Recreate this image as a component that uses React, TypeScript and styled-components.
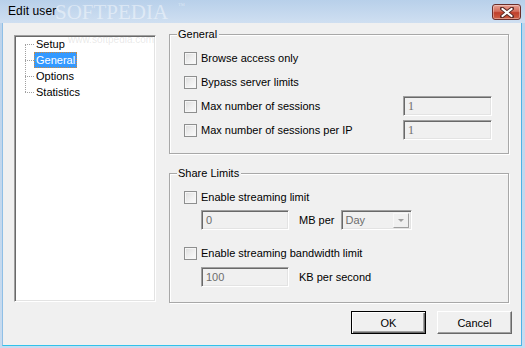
import styled, { createGlobalStyle } from 'styled-components';

const Global = createGlobalStyle`
  html, body {
    margin: 0;
    padding: 0;
    background: #f0f0f0;
  }
  * {
    box-sizing: border-box;
  }
`;

// outer window frame
const Window = styled.div`
  position: relative;
  width: 525px;
  height: 348px;
  display: flex;
  flex-direction: column;
  background: linear-gradient(#bcd3eb, #c8dbef);
  font-family: "Liberation Sans", Arial, sans-serif;
  font-size: 11px;
  color: #000;
  overflow: hidden;
`;

const TitleBar = styled.div`
  height: 23px;
  display: flex;
  align-items: center;
  justify-content: space-between;
  padding: 0 4px 2px 8px;
  background: linear-gradient(#b8d0ea, #cfdff1);
`;

const TitleText = styled.span`
  font-size: 12px;
  letter-spacing: 0.1px;
`;

const CloseButton = styled.div`
  width: 29px;
  height: 16px;
  margin-top: 3px;
  border: 1px solid #6b2e2a;
  border-radius: 3px;
  background: linear-gradient(#e6a092 0%, #d46e5c 45%, #bf3f2a 55%, #cf6046 100%);
  box-shadow: inset 0 0 0 1px rgba(255, 255, 255, 0.35);
  display: flex;
  align-items: center;
  justify-content: center;
`;

// grey dialog surface inside the frame
const Body = styled.div`
  flex: 1;
  margin: 0 3px 2px 2px;
  background: #f0f0f0;
  border-left: 1px solid #8fbfe6;
  border-right: 1px solid #4fb1e6;
  border-bottom: 1px solid #30c2ea;
  padding: 12px 9px 0 11px;
  display: flex;
  flex-direction: column;
`;

const Main = styled.div`
  display: flex;
  align-items: flex-start;
`;

// tree view on the left
const Tree = styled.div`
  position: relative;
  width: 142px;
  height: 267px;
  background: #fff;
  border: 1px solid;
  border-color: #a0a0a0 #fff #fff #a0a0a0;
  box-shadow: inset 1px 1px 0 #696969, inset -1px -1px 0 #e3e3e3;
`;

const TreeList = styled.div`
  position: relative;
  &::before {
    content: "";
    position: absolute;
    left: 10px;
    top: 8px;
    bottom: 8px;
    border-left: 1px dotted #a0a0a0;
  }
`;

const TreeItem = styled.div`
  position: relative;
  height: 16px;
  display: flex;
  align-items: center;
  padding-left: 19px;
  &::before {
    content: "";
    position: absolute;
    left: 10px;
    top: 8px;
    width: 9px;
    border-top: 1px dotted #a0a0a0;
  }
`;

const TreeLabel = styled.span<{ $selected?: boolean }>`
  height: 16px;
  line-height: 14px;
  padding: 0 1px;
  border: 1px ${(p) => (p.$selected ? 'dotted #d08a3a' : 'solid transparent')};
  background: ${(p) => (p.$selected ? '#3399ff' : 'transparent')};
  color: ${(p) => (p.$selected ? '#fff' : '#000')};
`;

// right column with the group boxes
const Column = styled.div`
  width: 340px;
  margin-left: 13px;
  margin-top: -1px;
  display: flex;
  flex-direction: column;
  gap: 19px;
`;

const GroupBox = styled.div<{ $height: number }>`
  height: ${(p) => p.$height}px;
  border: 1px solid #a8a8a8;
  box-shadow: 1px 1px 0 #fff, inset 1px 1px 0 #fff;
  padding: 0 16px 0 14px;
`;

const GroupTitle = styled.div`
  width: fit-content;
  margin: -7px 0 0 -7px;
  padding: 0 2px 0 1px;
  line-height: 13px;
  background: #f0f0f0;
`;

const Rows = styled.div`
  margin-top: 5px;
  display: flex;
  flex-direction: column;
`;

const CheckRow = styled.div<{ $top?: number }>`
  height: 24px;
  margin-top: ${(p) => p.$top ?? 0}px;
  display: grid;
  grid-template-columns: 1fr 89px;
  align-items: center;
`;

const CheckLabel = styled.label`
  display: flex;
  align-items: center;
  gap: 4px;
  white-space: nowrap;
`;

const Box = styled.span`
  width: 13px;
  height: 13px;
  border: 1px solid #8e8f8f;
  background: linear-gradient(135deg, #dcdcdc 0%, #eeeeee 50%, #fcfcfc 100%);
  box-shadow: inset 0 0 0 1px #f6f6f6;
`;

const SubRow = styled.div<{ $top: number }>`
  height: 20px;
  margin-top: ${(p) => p.$top}px;
  padding-left: 17px;
  display: flex;
  align-items: center;
`;

const TextField = styled.div<{ $width: number; $serif?: boolean }>`
  width: ${(p) => p.$width}px;
  height: 20px;
  border: 1px solid;
  border-color: #a0a0a0 #fff #fff #a0a0a0;
  box-shadow: inset 1px 1px 0 #696969, inset -1px -1px 0 #e3e3e3;
  background: #f0f0f0;
  color: #6d6d6d;
  padding: 0 4px;
  display: flex;
  align-items: center;
  font-family: ${(p) => (p.$serif ? '"Liberation Serif", "Times New Roman", serif' : 'inherit')};
  font-size: ${(p) => (p.$serif ? '12px' : '11px')};
`;

const Unit = styled.span`
  margin-left: 10px;
`;

const Select = styled(TextField)`
  margin-left: 7px;
  padding: 0 2px 0 3px;
  justify-content: space-between;
`;

const DropButton = styled.span`
  width: 16px;
  height: 15px;
  border: 1px solid;
  border-color: #f8f8f8 #a0a0a0 #a0a0a0 #f8f8f8;
  background: #f0f0f0;
  display: flex;
  align-items: center;
  justify-content: center;
  &::after {
    content: "";
    border-left: 3px solid transparent;
    border-right: 3px solid transparent;
    border-top: 3px solid #a0a0a0;
  }
`;

const Buttons = styled.div`
  margin-top: 8px;
  display: flex;
  justify-content: flex-end;
  gap: 11px;
`;

const Button = styled.div<{ $default?: boolean }>`
  width: 75px;
  height: 23px;
  display: flex;
  align-items: center;
  justify-content: center;
  background: #f0f0f0;
  border: 1px solid;
  box-shadow: ${(p) =>
    p.$default
      ? 'inset 1px 1px 0 #fff, inset -1px -1px 0 #696969, inset -2px -2px 0 #a0a0a0'
      : 'inset -1px -1px 0 #a0a0a0'};
  border-color: ${(p) => (p.$default ? '#000' : '#fff #696969 #696969 #fff')};
`;

// faint watermark from the source screenshot
const Watermark = styled.span<{ $x: number; $y: number; $size: number }>`
  position: absolute;
  left: ${(p) => p.$x}px;
  top: ${(p) => p.$y}px;
  font-family: "Liberation Serif", "Times New Roman", serif;
  font-size: ${(p) => p.$size}px;
  line-height: 1;
  color: rgba(255, 255, 255, 0.45);
  pointer-events: none;
  white-space: nowrap;
`;

const TreeMark = styled(Watermark)`
  font-family: "Liberation Sans", Arial, sans-serif;
  color: rgba(150, 150, 150, 0.22);
`;

function Check({ label }: { label: string }) {
  return (
    <CheckLabel>
      <Box />
      {label}
    </CheckLabel>
  );
}

export default function App() {
  const treeItems = ['Setup', 'General', 'Options', 'Statistics'];
  return (
    <>
      <Global />
      <Window>
        <TitleBar>
          <TitleText>Edit user</TitleText>
          <CloseButton>
            <svg width="14" height="11" viewBox="0 0 14 11">
              <path d="M2 1.5 L12 9.5 M12 1.5 L2 9.5" stroke="#5a2a26" strokeWidth="4" strokeLinecap="round" />
              <path d="M2.5 2 L11.5 9 M11.5 2 L2.5 9" stroke="#fff" strokeWidth="2.2" strokeLinecap="round" />
            </svg>
          </CloseButton>
        </TitleBar>
        <Body>
          <Main>
            <Tree>
              <TreeList>
                {treeItems.map((t) => (
                  <TreeItem key={t}>
                    <TreeLabel $selected={t === 'General'}>{t}</TreeLabel>
                  </TreeItem>
                ))}
              </TreeList>
            </Tree>
            <Column>
              <GroupBox $height={120}>
                <GroupTitle>General</GroupTitle>
                <Rows>
                  <CheckRow>
                    <Check label="Browse access only" />
                  </CheckRow>
                  <CheckRow>
                    <Check label="Bypass server limits" />
                  </CheckRow>
                  <CheckRow>
                    <Check label="Max number of sessions" />
                    <TextField $width={89} $serif>1</TextField>
                  </CheckRow>
                  <CheckRow>
                    <Check label="Max number of sessions per IP" />
                    <TextField $width={89} $serif>1</TextField>
                  </CheckRow>
                </Rows>
              </GroupBox>
              <GroupBox $height={130}>
                <GroupTitle>Share Limits</GroupTitle>
                <Rows>
                  <CheckRow>
                    <Check label="Enable streaming limit" />
                  </CheckRow>
                  <SubRow $top={1}>
                    <TextField $width={88}>0</TextField>
                    <Unit>MB per</Unit>
                    <Select $width={71}>
                      Day
                      <DropButton />
                    </Select>
                  </SubRow>
                  <CheckRow $top={11}>
                    <Check label="Enable streaming bandwidth limit" />
                  </CheckRow>
                  <SubRow $top={2}>
                    <TextField $width={88}>100</TextField>
                    <Unit>KB per second</Unit>
                  </SubRow>
                </Rows>
              </GroupBox>
            </Column>
          </Main>
          <Buttons>
            <Button $default>OK</Button>
            <Button>Cancel</Button>
          </Buttons>
        </Body>
        <Watermark $x={55} $y={2} $size={21}>SOFTPEDIA</Watermark>
        <Watermark $x={178} $y={3} $size={7}>™</Watermark>
        <TreeMark $x={68} $y={35} $size={10}>www.softpedia.com</TreeMark>
      </Window>
    </>
  );
}
